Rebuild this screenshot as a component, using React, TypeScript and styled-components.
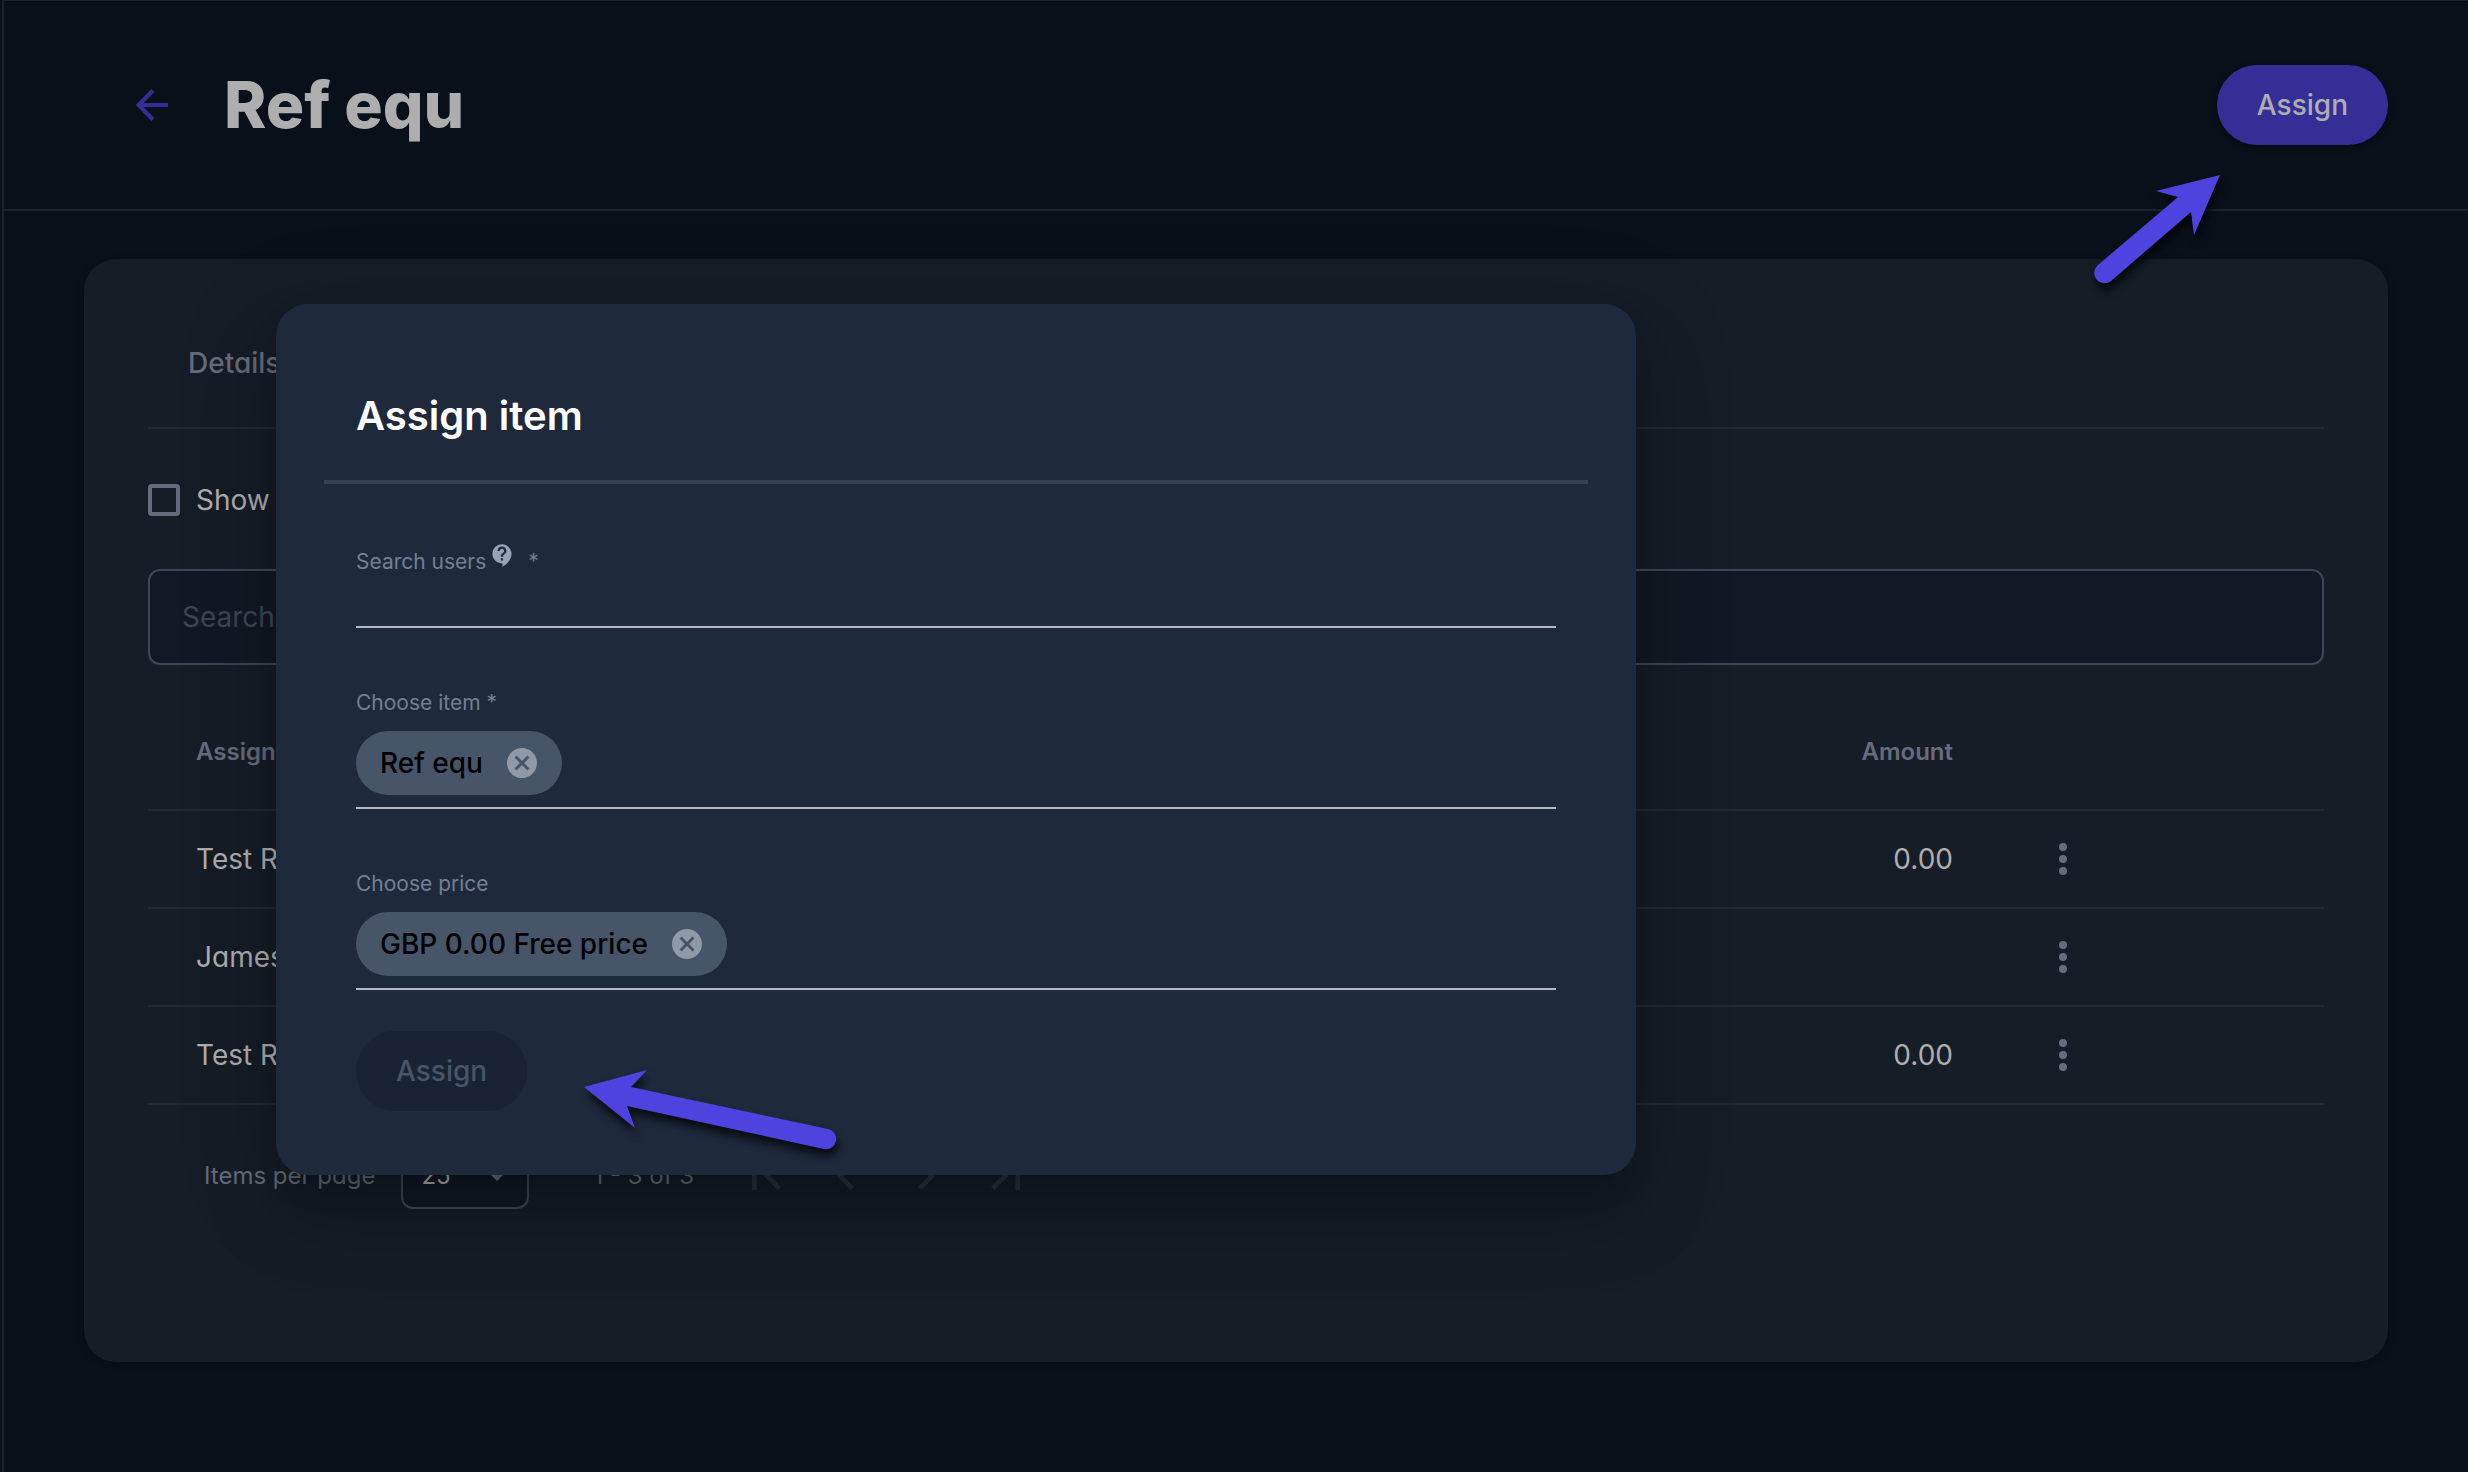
import React from "react";
import styled, { createGlobalStyle } from "styled-components";

const GlobalStyle = createGlobalStyle`
  *, *::before, *::after { box-sizing: border-box; }
  body {
    margin: 0;
    background: #0a101a;
    color: #aeaeae;
    font-family: Inter, "Liberation Sans", sans-serif;
    font-size: 28px;
    line-height: 40px;
    font-feature-settings: "cv11";
  }
  button, input, select { font: inherit; color: inherit; }
  button { margin: 0; padding: 0; border: 0; background: none; cursor: pointer; }
`;

const Page = styled.div`
  min-height: 100vh;
  margin-left: 2px;
  border-left: 2px solid #1d222d;
  border-top: 1px solid #1d222d;
`;

const Header = styled.header`
  display: flex;
  align-items: center;
  gap: 48px;
  padding: 64px 80px 64px 124px;
  border-bottom: 2px solid #1d222d;
`;

const BackLink = styled.a`
  display: flex;
  color: #352e97;
`;

const Title = styled.h1`
  flex: 1;
  margin: 0;
  font-size: 64px;
  line-height: 80px;
  font-weight: 800;
`;

const PillButton = styled.button`
  height: 80px;
  padding: 0 40px;
  border-radius: 40px;
  font-weight: 500;
  background: #352e97;
  color: #aeaeae;
  box-shadow: 0 2px 6px rgba(0, 0, 0, 0.4);

  &:disabled {
    background: #1a2235;
    color: #475569;
    box-shadow: none;
    cursor: default;
  }
`;

const Main = styled.main`
  padding: 48px 80px;
`;

const Card = styled.section`
  padding: 64px 64px 146px;
  border-radius: 32px;
  background: #161d27;
  box-shadow: 0 2px 6px rgba(0, 0, 0, 0.3);
`;

const Tabs = styled.nav`
  display: flex;
  padding: 20px 40px 44px;
  border-bottom: 2px solid #232934;
`;

const Tab = styled.button`
  font-weight: 500;
  color: #656d7a;
`;

const CheckRow = styled.label`
  display: flex;
  align-items: center;
  gap: 16px;
  margin-top: 51px;
`;

const Checkbox = styled.input`
  appearance: none;
  width: 32px;
  height: 32px;
  margin: 0;
  border: 4px solid #656d7c;
  border-radius: 4px;
`;

const SearchBox = styled.input`
  display: block;
  width: 100%;
  height: 96px;
  margin: 49px 0 29px;
  padding: 0 32px;
  border: 2px solid #3f4754;
  border-radius: 12px;
  background: #121924;
  font-feature-settings: normal;

  &::placeholder { color: #3d4653; opacity: 1; }
`;

const Table = styled.table`
  width: 100%;
  table-layout: fixed;
  border-collapse: collapse;
`;

const Cell = styled.td<{ $right?: boolean }>`
  height: 98px;
  padding: 0 0 0 ${(p) => (p.$right ? 0 : 48)}px;
  border-bottom: 2px solid #232934;
  text-align: ${(p) => (p.$right ? "right" : "left")};
`;

const HeadCell = styled(Cell)`
  height: 116px;
  font-size: 24px;
  font-weight: 600;
  color: #656d7c;
`;

const ActionColumn = styled.col`
  width: 371px;
`;

const ActionCell = styled(Cell)`
  padding-left: 90px;
`;

const IconButton = styled.button<{ $size: number }>`
  display: flex;
  align-items: center;
  justify-content: center;
  width: ${(p) => p.$size}px;
  height: ${(p) => p.$size}px;
`;

const Paginator = styled.footer`
  display: flex;
  align-items: center;
  margin-top: 31px;
  padding-left: 56px;
  font-size: 24px;
  color: #656d7a;
`;

const PageSize = styled.label`
  display: flex;
  align-items: center;
  gap: 26px;
`;

const SelectWrap = styled.span`
  position: relative;
  display: flex;
`;

const Select = styled.select`
  appearance: none;
  width: 128px;
  height: 66px;
  padding: 0 18px;
  border: 2px solid #3f4754;
  border-radius: 12px;
  background: #121924;
  color: #aeaeae;
`;

const SelectArrow = styled.svg`
  position: absolute;
  right: 24px;
  top: 30px;
  pointer-events: none;
`;

const Range = styled.span`
  width: 133px;
  margin-left: 64px;
`;

const PagerButtons = styled.div`
  display: flex;
  color: #2b313c;
`;

const Overlay = styled.div`
  position: absolute;
  top: 304px;
  left: 276px;
  right: 0;
`;

const Dialog = styled.section`
  width: 1360px;
  max-width: 100%;
  padding: 80px 48px 64px;
  border-radius: 32px;
  background: #1e293b;
  box-shadow:
    0 22px 30px -14px rgba(0, 0, 0, 0.2),
    0 48px 76px 6px rgba(0, 0, 0, 0.14),
    0 18px 92px 16px rgba(0, 0, 0, 0.12);
`;

const DialogTitle = styled.h2`
  margin: 0;
  padding: 8px 32px 40px;
  border-bottom: 4px solid #374151;
  font-size: 40px;
  line-height: 48px;
  font-weight: 600;
  color: #fff;
`;

const Form = styled.form`
  display: flex;
  flex-direction: column;
  align-items: stretch;
  padding: 62px 32px 0;
`;

const Field = styled.div<{ $gap: number }>`
  display: flex;
  flex-direction: column;
  margin-bottom: ${(p) => p.$gap}px;
  border-bottom: 2px solid #b4b9c1;
`;

const FieldLabel = styled.label`
  display: flex;
  align-items: center;
  height: 32px;
  font-size: 21px;
  line-height: 32px;
  white-space: pre;
  color: #718096;
  font-feature-settings: normal;
`;

const HelpIcon = styled.svg`
  align-self: flex-start;
  margin: -4px 6px 0 3px;
  color: #94a3b8;
`;

const UserInput = styled.input`
  height: 48px;
  padding: 0;
  border: 0;
  background: transparent;
  color: #fff;
  outline: none;
`;

const ChipRow = styled.div`
  display: flex;
  padding: 12px 0;
`;

const Chip = styled.span`
  display: flex;
  align-items: center;
  gap: 21px;
  height: 64px;
  padding: 0 22px 0 24px;
  border-radius: 32px;
  background: #475569;
  color: #000;
  font-weight: 500;
`;

const ChipRemove = styled(IconButton)`
  color: #9299a6;
`;

const Actions = styled.div`
  display: flex;
`;

const Pointer = styled.svg<{ $left?: number; $right?: number; $top: number }>`
  position: absolute;
  top: ${(p) => p.$top}px;
  ${(p) => (p.$left !== undefined ? `left: ${p.$left}px;` : `right: ${p.$right}px;`)}
  overflow: visible;
  pointer-events: none;
  filter: drop-shadow(2px 7px 4px rgba(0, 0, 0, 0.7));
`;

const ROWS = [
  { name: "Test R", amount: "0.00" },
  { name: "James", amount: "" },
  { name: "Test R", amount: "0.00" },
];

const PAGER = [
  { label: "First page", path: "M18.41 16.59L13.82 12l4.59-4.59L17 6l-6 6 6 6zM6 6h2v12H6z" },
  { label: "Previous page", path: "M15.41 7.41L14 6l-6 6 6 6 1.41-1.41L10.83 12z" },
  { label: "Next page", path: "M10 6L8.59 7.41 13.17 12l-4.58 4.59L10 18l6-6z" },
  { label: "Last page", path: "M5.59 7.41L10.18 12l-4.59 4.59L7 18l6-6-6-6zM16 6h2v12h-2z" },
];

function ChipField({ label, value, id, gap }: { label: string; value: string; id: string; gap: number }) {
  return (
    <Field $gap={gap} role="group" aria-labelledby={id}>
      <FieldLabel as="span" id={id}>{label}</FieldLabel>
      <ChipRow>
        <Chip>
          {value}
          <ChipRemove $size={36} type="button" aria-label={`Remove ${value}`}>
            <svg width="36" height="36" viewBox="0 0 24 24" fill="currentColor">
              <path d="M12 2C6.47 2 2 6.47 2 12s4.47 10 10 10 10-4.47 10-10S17.53 2 12 2zm5 13.59L15.59 17 12 13.41 8.41 17 7 15.59 10.59 12 7 8.41 8.41 7 12 10.59 15.59 7 17 8.41 13.41 12 17 15.59z" />
            </svg>
          </ChipRemove>
        </Chip>
      </ChipRow>
    </Field>
  );
}

export default function App() {
  return (
    <>
      <GlobalStyle />
      <Page>
        <Header>
          <BackLink href="#" aria-label="Back">
            <svg width="48" height="48" viewBox="0 0 48 48" fill="none" stroke="currentColor" strokeWidth="4">
              <path d="M40 24H11M25 9.500L10.500 24L25 38.500" />
            </svg>
          </BackLink>
          <Title>Ref equ</Title>
          <PillButton type="button">Assign</PillButton>
        </Header>
        <Main>
          <Card>
            <Tabs>
              <Tab type="button">Details</Tab>
            </Tabs>
            <CheckRow>
              <Checkbox type="checkbox" />
              Show
            </CheckRow>
            <SearchBox type="text" placeholder="Search" aria-label="Search" />
            <Table>
              <colgroup>
                <col />
                <col />
                <ActionColumn />
              </colgroup>
              <thead>
                <tr>
                  <HeadCell as="th" scope="col">Assign</HeadCell>
                  <HeadCell as="th" scope="col" $right>Amount</HeadCell>
                  <HeadCell />
                </tr>
              </thead>
              <tbody>
                {ROWS.map((row, i) => (
                  <tr key={i}>
                    <Cell>{row.name}</Cell>
                    <Cell $right>{row.amount}</Cell>
                    <ActionCell>
                      <IconButton $size={40} type="button" aria-label="Row actions">
                        <svg width="8" height="32" viewBox="0 0 8 32" fill="#656d7c">
                          <circle cx="4" cy="4" r="4" />
                          <circle cx="4" cy="16" r="4" />
                          <circle cx="4" cy="28" r="4" />
                        </svg>
                      </IconButton>
                    </ActionCell>
                  </tr>
                ))}
              </tbody>
            </Table>
            <Paginator>
              <PageSize>
                Items per page
                <SelectWrap>
                  <Select defaultValue="25">
                    <option>25</option>
                  </Select>
                  <SelectArrow width="16" height="8" viewBox="0 0 16 8" fill="#656d7a">
                    <path d="M0 0h16L8 8z" />
                  </SelectArrow>
                </SelectWrap>
              </PageSize>
              <Range>1 - 3 of 3</Range>
              <PagerButtons>
                {PAGER.map((p) => (
                  <IconButton key={p.label} $size={80} type="button" aria-label={p.label}>
                    <svg width="56" height="56" viewBox="0 0 24 24" fill="currentColor">
                      <path d={p.path} />
                    </svg>
                  </IconButton>
                ))}
              </PagerButtons>
            </Paginator>
          </Card>
        </Main>
      </Page>

      <Overlay>
        <Dialog role="dialog" aria-labelledby="dialog-title">
          <DialogTitle id="dialog-title">Assign item</DialogTitle>
          <Form>
            <Field $gap={59}>
              <FieldLabel htmlFor="users">
                Search users
                <HelpIcon width="27" height="27" viewBox="0 0 24 24" fill="currentColor">
                  <path d="M11.500 2C6.810 2 3 5.810 3 10.500S6.810 19 11.500 19h.5v3c4.860-2.340 8-7 8-11.500C20 5.810 16.190 2 11.500 2zm1 14.500h-2v-2h2v2zm0-3.500h-2c0-3.250 3-3 3-5 0-1.100-.9-2-2-2s-2 .9-2 2h-2c0-2.210 1.790-4 4-4s4 1.790 4 4c0 2.500-3 2.750-3 5z" />
                </HelpIcon>
                {" *"}
              </FieldLabel>
              <UserInput id="users" type="text" required />
            </Field>
            <ChipField id="item" label="Choose item *" value="Ref equ" gap={59} />
            <ChipField id="price" label="Choose price" value="GBP 0.00 Free price" gap={41} />
            <Actions>
              <PillButton type="submit" disabled>Assign</PillButton>
            </Actions>
          </Form>
        </Dialog>
      </Overlay>

      <Pointer $right={248} $top={175} width="126" height="108" viewBox="0 0 126 108" fill="#4f43e0" aria-hidden="true">
        <path d="M126 0L62 16L84 22L4 90A10 10 0 0 0 17 106L97 37L100 60Z" />
      </Pointer>
      <Pointer $left={584} $top={1070} width="252" height="80" viewBox="0 0 252 80" fill="#4f43e0" aria-hidden="true">
        <path d="M0 17L63 0L47 17L244 59A10 10 0 0 1 240 79L43 36L51 58Z" />
      </Pointer>
    </>
  );
}
